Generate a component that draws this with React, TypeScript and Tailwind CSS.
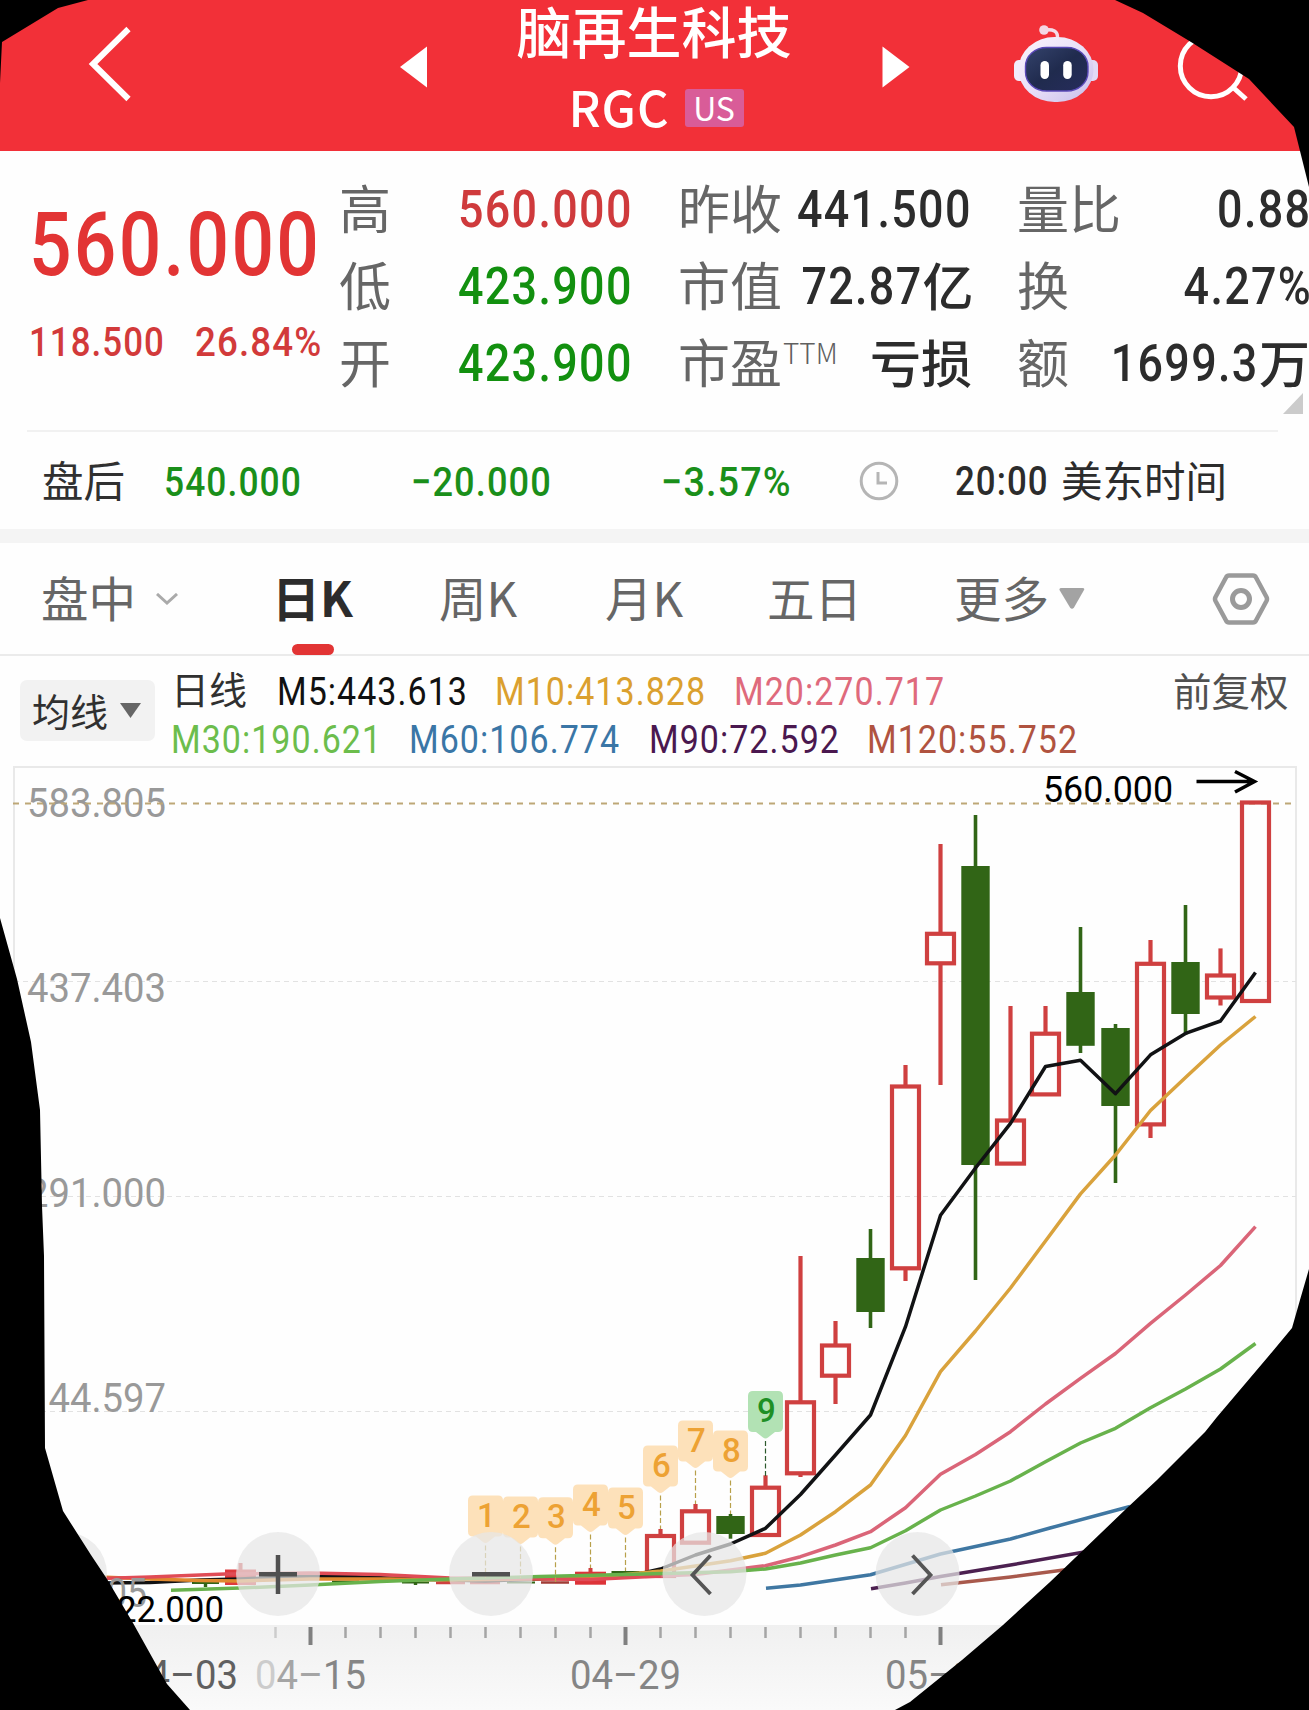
import React from 'react'
import clsx from 'clsx'

const CJK = "font-['Noto_Sans_CJK_SC',sans-serif]"
const DIGIT = "font-['Roboto',sans-serif]"

interface NumProps {
  children: React.ReactNode
  className?: string
}

const Num: React.FC<NumProps> = ({ children, className }) => (
  <span className={clsx(DIGIT, 'inline-block shrink-0 whitespace-nowrap leading-none tracking-[0.03em]', className)}>
    {children}
  </span>
)

const Header: React.FC = () => (
  <header className="flex h-[151px] bg-[#f23038] text-white">
    <div className="w-[390px] pl-[84px] pt-[24px]">
      <svg width="50" height="80" viewBox="0 0 50 80" fill="none" stroke="white" strokeWidth="6">
        <path d="M44.500 5 L9 40 L44.500 75" />
      </svg>
    </div>
    <div className="w-[50px] pl-[10px] pt-[46px]">
      <svg width="28" height="42" viewBox="0 0 28 42" fill="white">
        <path d="M0 21 L27 0.500 V41.500 Z" />
      </svg>
    </div>
    <div className="w-[428px] text-center">
      <div className="-mt-[4px] h-[75px] whitespace-nowrap text-[55px] font-medium leading-[66px]">脑再生科技</div>
      <div className="flex h-[74px] items-center justify-center gap-[15px] pl-[4px]">
        <span className="-mt-[5px] text-[49px] leading-none font-medium tracking-[0.02em]">RGC</span>
        <span className="flex h-[38px] w-[59px] items-center justify-center rounded-[3px] bg-[#d95c98] pb-[2px] text-[32px] font-normal leading-none">
          US
        </span>
      </div>
    </div>
    <div className="w-[141px] pl-[14px] pt-[46px]">
      <svg width="28" height="42" viewBox="0 0 28 42" fill="white">
        <path d="M27.500 21 L0.500 0.500 V41.500 Z" />
      </svg>
    </div>
    <div className="w-[164px] pl-[3px] pt-[22px]">
      <svg width="88" height="84" viewBox="1012 22 88 84">
        <defs>
          <linearGradient id="shell" x1="0" y1="0" x2="1" y2="1">
            <stop offset="0" stopColor="#fbf4fc" />
            <stop offset="0.500" stopColor="#e9e0f8" />
            <stop offset="1" stopColor="#c6bcea" />
          </linearGradient>
          <linearGradient id="visor" x1="0" y1="0" x2="1" y2="1">
            <stop offset="0" stopColor="#34436c" />
            <stop offset="0.500" stopColor="#202b4e" />
            <stop offset="1" stopColor="#262c5c" />
          </linearGradient>
        </defs>
        <path d="M1057.500 38 C1058 31 1053 29 1045 30" fill="none" stroke="#f4dbe8" strokeWidth="3.500" />
        <circle cx="1044" cy="30" r="4.800" fill="#f4d6e4" />
        <rect x="1014" y="60" width="14" height="21" rx="5" fill="#f1ecfb" />
        <rect x="1084" y="60" width="14" height="21" rx="5" fill="#e2daf5" />
        <rect x="1018.500" y="37" width="75" height="65" rx="36" ry="33" fill="url(#shell)" />
        <rect x="1025.500" y="47.500" width="62.500" height="43.500" rx="21" ry="19" fill="url(#visor)" stroke="#5a49b8" strokeWidth="1.400" />
        <rect x="1040.500" y="61" width="8.500" height="18" rx="4.200" fill="white" />
        <rect x="1063.200" y="61" width="8.500" height="18" rx="4.200" fill="white" />
      </svg>
    </div>
    <div className="pt-[30px]">
      <svg width="80" height="74" viewBox="1173 30 80 74" fill="none" stroke="white" strokeWidth="5">
        <circle cx="1211" cy="66" r="30.700" />
        <path d="M1232 86.500 L1246 99" />
      </svg>
    </div>
  </header>
)

const label = '-mt-[3px] whitespace-nowrap text-[52px] font-normal leading-none text-[#666666]'
const row = 'flex h-[77px] items-center justify-between'
const value = 'mt-[3px] origin-right scale-x-[0.862] text-[52px] font-medium'

const Quote: React.FC = () => (
  <section className="flex h-[279px] pt-[19px]">
    <div className="w-[339px] shrink-0 pl-[29px]">
      <div className="h-[150px] pt-[30px]">
        <Num className="origin-left scale-x-[0.842] text-[89px] font-medium text-[#e23434]">560.000</Num>
      </div>
      <div className="flex pt-[1px] text-[#d23a3a]">
        <Num className="w-[166px] origin-left scale-x-[0.84] text-[41.500px] font-medium">118.500</Num>
        <Num className="origin-left scale-x-[0.885] text-[41.500px] font-medium">26.84%</Num>
      </div>
    </div>
    <div className="w-[294px] shrink-0">
      <div className={row}>
        <span className={label}>高</span>
        <Num className={clsx(value, 'text-[#cf3a3c]')}>560.000</Num>
      </div>
      <div className={row}>
        <span className={label}>低</span>
        <Num className={clsx(value, 'text-[#12900f]')}>423.900</Num>
      </div>
      <div className={row}>
        <span className={label}>开</span>
        <Num className={clsx(value, 'text-[#12900f]')}>423.900</Num>
      </div>
    </div>
    <div className="ml-[45px] w-[294px] shrink-0 text-[#2c2c2c]">
      <div className={row}>
        <span className={label}>昨收</span>
        <Num className={clsx(value, '-ml-[30px]')}>441.500</Num>
      </div>
      <div className={row}>
        <span className={label}>市值</span>
        <span className="flex items-center justify-end">
          <Num className={value}>72.87</Num>
          <span className="-mt-[3px] text-[51px] font-medium leading-none">亿</span>
        </span>
      </div>
      <div className={row}>
        <span className="flex">
          <span className={label}>市盈</span>
          <span className="ml-[1px] text-[28px] font-light leading-none text-[#606060]">TTM</span>
        </span>
        <span className="-mt-[3px] whitespace-nowrap text-[51px] font-medium leading-none">亏损</span>
      </div>
    </div>
    <div className="ml-[45px] w-[293px] shrink-0 text-[#2c2c2c]">
      <div className={row}>
        <span className={label}>量比</span>
        <Num className={clsx(value, '-mr-[1px]')}>0.88</Num>
      </div>
      <div className={row}>
        <span className={label}>换</span>
        <Num className={clsx(value, '-mr-[2px]')}>4.27%</Num>
      </div>
      <div className={row}>
        <span className={label}>额</span>
        <span className="flex items-center justify-end">
          <Num className={value}>1699.3</Num>
          <span className="-mt-[3px] text-[51px] font-medium leading-none">万</span>
        </span>
      </div>
      <svg className="ml-auto mr-[7px] -mt-[8px]" width="20" height="21" viewBox="0 0 20 21" fill="#cbcbcb">
        <path d="M0 21 L20 0 V21 Z" />
      </svg>
    </div>
  </section>
)

const AfterHours: React.FC = () => (
  <section className="mx-[27px] flex h-[99px] w-[1251px] items-center border-t-2 border-[#f1f1f1] pt-[3px] text-[41.500px]">
    <span className="-mt-[4px] w-[137px] whitespace-nowrap pl-[15px] leading-none text-[#303030]">盘后</span>
    <Num className="w-[247px] origin-left scale-x-[0.853] font-medium text-[#1a8f1a]">540.000</Num>
    <Num className="w-[250px] origin-left scale-x-[0.872] font-medium text-[#1a8f1a]">−20.000</Num>
    <Num className="w-[198px] origin-left scale-x-[0.91] font-medium text-[#1a8f1a]">−3.57%</Num>
    <svg className="mr-[56px] -mt-[3px] shrink-0" width="40" height="40" viewBox="0 0 40 40" fill="none" stroke="#b5b5b5" strokeWidth="3">
      <circle cx="20" cy="20" r="17.800" />
      <path d="M19 11 V22 H28" />
    </svg>
    <Num className="-mt-[2px] w-[106px] origin-left scale-x-[0.84] font-medium text-[#2c2c2c]">20:00</Num>
    <span className="-mt-[4px] whitespace-nowrap leading-none text-[#2c2c2c]">美东时间</span>
  </section>
)

const Tabs: React.FC = () => (
  <nav className="flex h-[113px] items-center border-b-2 border-[#ebebeb] whitespace-nowrap text-[47.500px] font-normal leading-none text-[#666666]">
    <span className="-mt-[3px] w-[113px] pl-[41px]">盘中</span>
    <svg className="ml-[43px] shrink-0" width="22" height="12" viewBox="0 0 22 12" fill="none" stroke="#aaaaaa" strokeWidth="3">
      <path d="M1 1 L11 10 L21 1" />
    </svg>
    <div className="ml-[94px] flex h-[112px] w-[167px] flex-col">
      <span className="pt-[29px] text-[48px] font-bold text-[#2c2c2c]">日K</span>
      <span className="mt-[24px] ml-[20px] h-[11px] w-[42px] shrink-0 rounded-full bg-[#e23434]" />
    </div>
    <span className="-mt-[3px] w-[166px]">周K</span>
    <span className="-mt-[3px] w-[162px]">月K</span>
    <span className="-mt-[3px] w-[187px]">五日</span>
    <span className="-mt-[3px] w-[95px]">更多</span>
    <svg className="ml-[10px] shrink-0" width="26" height="21" viewBox="0 0 26 21" fill="#a3a3a3">
      <path d="M0.500 2 Q0 0 2.500 0 H23.500 Q26 0 25 2 L15 19.500 Q13 22 11 19.500 Z" />
    </svg>
    <svg className="ml-[127px] shrink-0" width="58" height="56" viewBox="0 0 58 56" fill="none" stroke="#9a9a9a" strokeWidth="4.500" strokeLinejoin="round">
      <path d="M17 4.500 H41 Q43 4.500 44 6.500 L54.500 26 Q55.500 28 54.500 30 L44 49.500 Q43 51.500 41 51.500 H17 Q15 51.500 14 49.500 L3.500 30 Q2.500 28 3.500 26 L14 6.500 Q15 4.500 17 4.500 Z" />
      <circle cx="29" cy="28" r="8.500" strokeWidth="5" />
    </svg>
  </nav>
)

const ma = 'mt-[3px] origin-left scale-x-[0.895] text-[38px] font-[450]'

const Legend: React.FC = () => (
  <section className="flex h-[110px]">
    <div className="mt-[24px] ml-[20px] flex h-[61px] w-[135px] items-center rounded-[7px] bg-[#f2f2f2] pl-[12px]">
      <span className="-mt-[2px] whitespace-nowrap text-[38px] leading-none text-[#303030]">均线</span>
      <svg className="ml-[12px]" width="21" height="15" viewBox="0 0 21 15" fill="#666666">
        <path d="M0 0 H21 L10.500 15 Z" />
      </svg>
    </div>
    <div className="w-[1002px] pl-[16px] pt-[10px]">
      <div className="flex h-[48px] items-center">
        <span className="-mt-[4px] w-[106px] whitespace-nowrap text-[38px] leading-none text-[#303030]">日线</span>
        <Num className={clsx(ma, 'w-[218px] text-[#111111]')}>M5:443.613</Num>
        <Num className={clsx(ma, 'w-[239px] text-[#dba02e]')}>M10:413.828</Num>
        <Num className={clsx(ma, 'text-[#df6a7c]')}>M20:270.717</Num>
      </div>
      <div className="flex h-[48px] items-center">
        <Num className={clsx(ma, 'w-[238px] text-[#6cbd4c]')}>M30:190.621</Num>
        <Num className={clsx(ma, 'w-[240px] text-[#3a76a6]')}>M60:106.774</Num>
        <Num className={clsx(ma, 'w-[218px] text-[#4a184f]')}>M90:72.592</Num>
        <Num className={clsx(ma, 'text-[#b05340]')}>M120:55.752</Num>
      </div>
    </div>
    <span className="pt-[14px] ml-[16px] whitespace-nowrap text-[38.500px] font-normal leading-none text-[#505050]">前复权</span>
  </section>
)

// distance between two trading days, and where 04-15 sits
const STEP = 35
const ORIGIN = 310.5
const at = (day: number) => ORIGIN + day * STEP

const RED = '#cf4040'
const GREEN = '#316516'

interface Candle {
  day: number
  up: boolean
  high: number
  top: number
  bottom: number
  low: number
}

const candles: Candle[] = [
  { day: 10, up: true, high: 1529, top: 1534, bottom: 1578, low: 1578 },
  { day: 11, up: true, high: 1504, top: 1509.3, bottom: 1544.7, low: 1544.7 },
  { day: 12, up: false, high: 1514, top: 1516, bottom: 1534, low: 1538.7 },
  { day: 13, up: true, high: 1475.3, top: 1485.7, bottom: 1537, low: 1537 },
  { day: 14, up: true, high: 1256, top: 1400.3, bottom: 1475.3, low: 1477 },
  { day: 15, up: true, high: 1321, top: 1343.5, bottom: 1377.7, low: 1404 },
  { day: 16, up: false, high: 1229, top: 1258, bottom: 1312, low: 1328 },
  { day: 17, up: true, high: 1065, top: 1084.5, bottom: 1270.3, low: 1281 },
  { day: 18, up: true, high: 844, top: 931.8, bottom: 965.3, low: 1085 },
  { day: 19, up: false, high: 815, top: 866, bottom: 1165, low: 1280 },
  { day: 20, up: true, high: 1006, top: 1118.5, bottom: 1165.6, low: 1165 },
  { day: 21, up: true, high: 1006, top: 1031.7, bottom: 1096.4, low: 1096 },
  { day: 22, up: false, high: 927, top: 992, bottom: 1045.8, low: 1053 },
  { day: 23, up: false, high: 1024, top: 1028, bottom: 1106, low: 1183 },
  { day: 24, up: true, high: 940, top: 961.8, bottom: 1126.4, low: 1138 },
  { day: 25, up: false, high: 905, top: 962, bottom: 1014, low: 1035 },
  { day: 26, up: true, high: 948.4, top: 973.5, bottom: 999.5, low: 1005.5 },
  { day: 27, up: true, high: 801, top: 800.5, bottom: 1003, low: 1003 },
]

const CandleStick: React.FC<Candle> = ({ day, up, high, top, bottom, low }) => {
  const x = at(day)
  return (
    <g>
      {high < top && <path d={`M${x} ${high}V${top + 1}`} stroke={up ? RED : GREEN} strokeWidth={up ? 4.2 : 3.6} />}
      {low > bottom && <path d={`M${x} ${bottom - 1}V${low}`} stroke={up ? RED : GREEN} strokeWidth={up ? 4.2 : 3.6} />}
      {up ? (
        <rect x={x - 13.5} y={top + 2} width="27" height={bottom - top - 4} fill="none" stroke={RED} strokeWidth="4.200" />
      ) : (
        <rect x={x - 14.2} y={top} width="28.400" height={bottom - top} fill={GREEN} />
      )}
    </g>
  )
}

const averages = [
  { color: '#111214', points: '100,1583 150,1582.500 200,1580 240,1579 310,1576 350,1576.500 400,1578.500 485,1581 590,1577 625,1576 645,1572.500 660.500,1569 695.500,1555 730.500,1544 765.500,1528.300 800.500,1494.500 835.500,1455 870.500,1415 905.500,1326.700 940.500,1215.200 975.500,1168 1010.500,1123.300 1045.500,1066.500 1080.500,1060.300 1115.500,1093.700 1150.500,1054.800 1185.500,1033.400 1220.500,1021 1255.500,972.500' },
  { color: '#e0892e', points: '100,1577 150,1579 200,1580.500 240,1581 310,1579 390,1579 450,1580 590,1578' },
  { color: '#d9a23c', points: '590,1578 660.500,1571 695.500,1566 730.500,1560.700 765.500,1553.300 800.500,1535 835.500,1511.700 870.500,1485 905.500,1435.500 940.500,1371.700 975.500,1331 1010.500,1288 1045.500,1241 1080.500,1193.900 1115.500,1155 1150.500,1110.500 1185.500,1077.500 1220.500,1045 1255.500,1016.500' },
  { color: '#e04c56', points: '100,1578.500 150,1577 225,1574 310,1573 380,1574.500 450,1578 590,1579.500 660.500,1576' },
  { color: '#da6578', points: '660.500,1576 695.500,1574.500 765.500,1565.700 800.500,1556.700 835.500,1545 870.500,1531.700 905.500,1507.700 940.500,1474.300 975.500,1454.500 1010.500,1431.700 1045.500,1404 1080.500,1378.300 1115.500,1353.500 1150.500,1323.300 1185.500,1295 1220.500,1265.500 1255.500,1226.600' },
  { color: '#68b24c', points: '171,1590.300 240,1588 310,1585 380,1581.500 450,1579 540,1576.500 625,1574.500 730.500,1571.700 765.500,1569 800.500,1563 835.500,1555 870.500,1547.700 905.500,1530.700 940.500,1510 975.500,1496 1010.500,1481 1045.500,1461.700 1080.500,1443 1115.500,1428.300 1150.500,1407.700 1185.500,1389 1220.500,1369 1255.500,1343.500' },
  { color: '#3f77a2', points: '766,1588.300 800.500,1585 870.500,1574.700 940.500,1554 1010.500,1539 1050,1528 1130,1506.500' },
  { color: '#4c2050', points: '871,1588.700 905.500,1583 940.500,1576.500 1010.500,1565 1090,1551' },
  { color: '#a8594c', points: '941,1584.700 1010.500,1577 1075,1568.500' },
]

const marks = [
  { n: 1, top: 1495.5, end: 1578 },
  { n: 2, top: 1496.5, end: 1578 },
  { n: 3, top: 1497.3, end: 1582 },
  { n: 4, top: 1484.5, end: 1568 },
  { n: 5, top: 1487.5, end: 1571 },
  { n: 6, top: 1445.5, end: 1529 },
  { n: 7, top: 1420.5, end: 1504 },
  { n: 8, top: 1430.5, end: 1514 },
  { n: 9, top: 1391, end: 1476 },
]

const gridLabels = [
  { text: '583.805', y: 816.5 },
  { text: '437.403', y: 1001.5 },
  { text: '291.000', y: 1206.5 },
  { text: '144.597', y: 1411.5 },
]

const Chart: React.FC = () => (
  <svg
    className={DIGIT}
    width="1309"
    height="944"
    viewBox="0 766 1309 944"
    fill="none"
  >
    <defs>
      <linearGradient id="axis" x1="0" y1="0" x2="0" y2="1">
        <stop offset="0" stopColor="#f0f0f0" />
        <stop offset="1" stopColor="#fafafa" />
      </linearGradient>
    </defs>

    <rect y="1625" width="1309" height="85" fill="url(#axis)" />
    <path d="M14 1625 V767 H1296 V1625" stroke="#e9e9e9" strokeWidth="2" />

    {[981.5, 1196.5, 1411.5].map((y) => (
      <path key={y} d={`M14 ${y}H1296`} stroke="#e2e2e2" strokeWidth="1.200" strokeDasharray="5 4" />
    ))}

    {gridLabels.map(({ text, y }) => (
      <text key={text} x="27" y={y} fontSize="41" fontWeight="450" fill="#999999" textLength="139" lengthAdjust="spacingAndGlyphs">
        {text}
      </text>
    ))}
    <path d="M13 803.500H1292" stroke="#bda777" strokeWidth="1.800" strokeDasharray="6 6" />

    {/* nearly flat days before the run-up */}
    <path d="M192 1583H219M332 1581.500H359" stroke={GREEN} strokeWidth="2" />
    <path d="M205.500 1582V1587" stroke={GREEN} strokeWidth="3.400" />
    <path d="M240.500 1563V1570" stroke={RED} strokeWidth="4" />
    <rect x="225" y="1569.500" width="31" height="15.500" fill="#de3a3e" />
    <path d="M436 1583H465M470 1583H500" stroke={RED} strokeWidth="2.500" />
    <path d="M402 1582.500H429M507 1582.500H535" stroke={GREEN} strokeWidth="2" />
    <path d="M415.500 1582V1585" stroke={GREEN} strokeWidth="3.400" />
    <path d="M541 1582.500H569" stroke="#a03c36" strokeWidth="2.500" />
    <path d="M590.500 1568V1573" stroke={RED} strokeWidth="4" />
    <rect x="575" y="1571.700" width="31" height="13" fill="#dd3338" />
    <rect x="611.500" y="1571" width="28" height="3.500" fill={GREEN} />

    {candles.map((c) => (
      <CandleStick key={c.day} {...c} />
    ))}
    {averages.map((a) => (
      <polyline key={a.color} points={a.points} stroke={a.color} strokeWidth="3.500" strokeLinejoin="round" />
    ))}

    {marks.map(({ n, top, end }) => {
      const x = at(n + 4)
      const last = n === 9
      return (
        <g key={n}>
          <path d={`M${x} ${top + 50}V${end}`} stroke={last ? '#2d5a2d' : '#b8a04a'} strokeWidth="1.200" strokeDasharray="5 2.500" />
          <path
            d={`M${x - 12.5} ${top}h25q5 0 5 5v31q0 5 -5 5h-3l-7 5.500q-2.500 2 -5 0l-7 -5.500h-3q-5 0 -5 -5v-31q0 -5 5 -5z`}
            fill={last ? '#b2e2b4' : '#fde1ba'}
          />
          <text x={x + 1} y={top + 31} fontSize="33" fontWeight="500" textAnchor="middle" fill={last ? '#1d8f24' : '#eda234'}>
            {n}
          </text>
        </g>
      )
    })}

    <text x="107" y="1607" fontSize="41" fill="#999999" textLength="40" lengthAdjust="spacingAndGlyphs">05</text>
    <text x="117" y="1622" fontSize="37" fill="#000000" textLength="107" lengthAdjust="spacingAndGlyphs">22.000</text>
    <text x="1043" y="802" fontSize="37" fill="#000000" textLength="130" lengthAdjust="spacingAndGlyphs">560.000</text>
    <path d="M1196.500 781.500H1254M1235 771.500L1254.500 781.500L1235 792" stroke="#000000" strokeWidth="3.500" />

    {/* floating controls */}
    {[65, 278, 491, 704.5, 917.5].map((cx) => (
      <circle key={cx} cx={cx} cy="1574" r="42" fill="#e6e6e6" fillOpacity="0.720" />
    ))}
    <path d="M259 1574.300H297M278 1555V1594M472 1574.300H510" stroke="#505050" strokeWidth="4.500" />
    <path d="M710.500 1555.500L692.500 1575L710.500 1594M912.500 1555.500L930.500 1575L912.500 1594" stroke="#555555" strokeWidth="3.800" />

    {Array.from({ length: 20 }, (_, i) => i - 1).map((day) => {
      const major = day % 9 === 0
      return (
        <path
          key={day}
          d={`M${at(day)} 1627v${major ? 18 : 11}`}
          stroke={day === -1 ? '#cccccc' : major ? '#808080' : '#a5a5a5'}
          strokeWidth={major ? 4 : 2.5}
        />
      )
    })}
    <g fontSize="41" fill="#858585" fontWeight="450">
      <text x="127" y="1689" fill="#606060" textLength="111" lengthAdjust="spacingAndGlyphs">04–03</text>
      <text x="255" y="1689" textLength="111" lengthAdjust="spacingAndGlyphs">
        <tspan fill="#cccccc">0</tspan>
        <tspan fill="#a5a5a5">4–</tspan>
        <tspan>15</tspan>
      </text>
      <text x="570" y="1689" textLength="111" lengthAdjust="spacingAndGlyphs">04–29</text>
      <text x="885" y="1689" textLength="111" lengthAdjust="spacingAndGlyphs">05–15</text>
    </g>
  </svg>
)

const Edges: React.FC = () => (
  <svg className="absolute inset-0" width="1309" height="1710" viewBox="0 0 1309 1710" fill="#000000">
    <path d="M0 0H88L58 8L2 42L0 83Z" />
    <path d="M1115 0L1143 13L1191 42L1249 79L1294 127L1300 151L1309 187V0Z" />
    <path d="M0 918L17 979L31 1042L40 1110L42 1206L44 1256L45 1448L63 1511L91 1555L107 1579L133 1623L167 1684L190 1710H0Z" />
    <path d="M1309 1269L1300 1300L1292 1328L1267 1358L1217 1417L1205 1432L1157 1480L1127 1508L1050 1582L1003 1625L962 1660L910 1702L895 1710H1309Z" />
  </svg>
)

const App: React.FC = () => {
  return (
    <div className={clsx(CJK, 'relative h-[1710px] w-[1309px] overflow-hidden bg-[#fefefe]')}>
      <Header />
      <Quote />
      <AfterHours />
      <div className="h-[14px] bg-[#f4f4f4]" />
      <Tabs />
      <Legend />
      <Chart />
      <Edges />
    </div>
  )
}

export default App
